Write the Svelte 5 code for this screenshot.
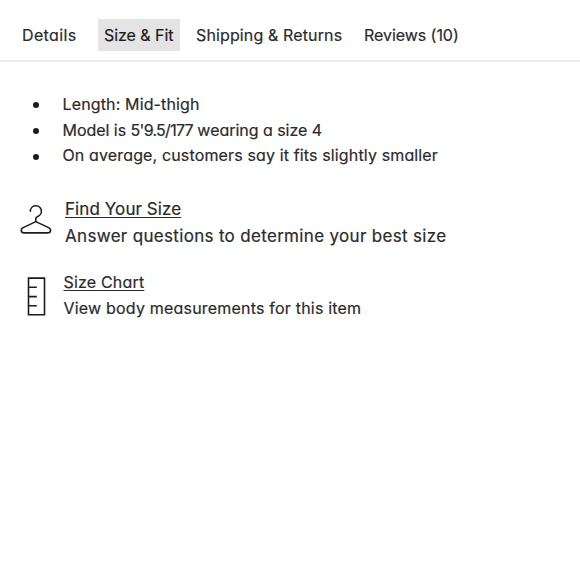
<script lang="ts">
	type Tab = { id: string; label: string };
	type Fact = { id: string; text: string; measure?: string; rest?: string };

	const tabs: Tab[] = [
		{ id: 'details', label: 'Details' },
		{ id: 'fit', label: 'Size & Fit' },
		{ id: 'shipping', label: 'Shipping & Returns' },
		{ id: 'reviews', label: 'Reviews (10)' }
	];

	const facts: Fact[] = [
		{ id: 'length', text: 'Length: Mid-thigh' },
		{ id: 'model', text: 'Model is ', measure: "5'9.5/177", rest: ' wearing a size 4' },
		{ id: 'average', text: 'On average, customers say it fits slightly smaller' }
	];

	let active = $state('fit');
</script>

<div class="panel">
	<nav class="tabs">
		{#each tabs as tab (tab.id)}
			<button
				type="button"
				class="tab {tab.id}"
				class:active={active === tab.id}
				onclick={() => (active = tab.id)}
			>
				{tab.label}
			</button>
		{/each}
	</nav>

	<ul class="facts">
		{#each facts as fact (fact.id)}
			<li>
				<span class="dot"></span>
				<span class={fact.id}
					>{fact.text}{#if fact.measure}<span class="measure">{fact.measure}</span
						>{fact.rest}{/if}</span
				>
			</li>
		{/each}
	</ul>

	<section class="help find">
		<svg class="hanger" width="32" height="32" viewBox="0 0 32 32">
			<path
				d="M10.4 7.7A5.5 5.5 0 1 1 17.8 12.4Q15.8 13.1 15.8 14.8V17.6M15.8 17.6L3.2 23.6C0.2 25.1 0.9 28.9 4 28.9H27.8C31 28.9 31.6 25.1 28.6 23.6Z"
			/>
		</svg>
		<div>
			<a href="#find-size">Find Your Size</a>
			<p>Answer questions to determine your best size</p>
		</div>
	</section>

	<section class="help chart">
		<svg class="ruler" width="20" height="40" viewBox="0 0 20 40">
			<path d="M1.5 1.1H17.5V37.8H1.5ZM1.5 10.3H9.8M1.5 19.6H9.8M1.5 28.7H9.8" />
		</svg>
		<div>
			<a href="#size-chart">Size Chart</a>
			<p>View body measurements for this item</p>
		</div>
	</section>
</div>

<style>
	:global(body) {
		margin: 0;
		background: #fff;
	}

	.panel {
		min-height: 580px;
		font-family: Inter, 'Liberation Sans', sans-serif;
		font-size: 16px;
		/* single-storey a */
		font-feature-settings: 'cv11' 1;
		-webkit-text-stroke: 0.2px currentColor;
		color: #2b2b2b;
		white-space: nowrap;
	}

	.tabs {
		display: flex;
		box-sizing: border-box;
		height: 62px;
		padding: 19px 0 0 16px;
		border-bottom: 2px solid #ebebeb;
	}

	.tab {
		box-sizing: border-box;
		height: 32px;
		padding: 0 0 0 6px;
		border: none;
		background: none;
		font: inherit;
		font-feature-settings: inherit;
		line-height: 33px;
		text-align: left;
		color: inherit;
		cursor: pointer;
	}

	.tab.active {
		background: #e4e4e4;
		color: #1c1c1c;
	}

	.details {
		width: 82px;
		letter-spacing: 0.36px;
	}

	.fit {
		width: 82px;
		margin-right: 10px;
		letter-spacing: -0.05px;
	}

	.shipping {
		width: 168px;
		letter-spacing: 0.13px;
	}

	.reviews {
		letter-spacing: -0.05px;
	}

	.facts {
		margin: 29px 0 0;
		padding: 0 0 0 33px;
		list-style: none;
	}

	.facts li {
		display: flex;
		align-items: center;
		height: 25.7px;
		letter-spacing: 0.14px;
	}

	.facts .model {
		letter-spacing: -0.03px;
	}

	.model .measure {
		letter-spacing: -0.73px;
	}

	.dot {
		width: 6px;
		height: 6px;
		margin: 3px 23.5px 0 0;
		border-radius: 50%;
		background: #1c1c1c;
	}

	.help {
		display: flex;
		padding-left: 20px;
	}

	.help a {
		display: block;
		width: max-content;
		color: inherit;
		text-decoration: underline;
		text-decoration-thickness: 1px;
		text-underline-offset: 2px;
		text-decoration-skip-ink: none;
	}

	.help p {
		margin: 0;
	}

	.find {
		margin-top: 28px;
		font-size: 17px;
		line-height: 27px;
	}

	.find a {
		letter-spacing: 0.08px;
	}

	.find p {
		letter-spacing: 0.32px;
	}

	.chart {
		margin-top: 19px;
		line-height: 26px;
	}

	.chart a {
		letter-spacing: 0.18px;
	}

	.chart p {
		letter-spacing: 0.2px;
	}

	.hanger {
		margin: 8px 13px 0 0;
	}

	.ruler {
		margin: 8px 16.5px 0 7px;
	}

	svg {
		flex: none;
		fill: none;
		stroke: #1c1c1c;
		stroke-width: 1.6;
		stroke-linejoin: round;
	}

	.ruler path {
		stroke-linejoin: miter;
	}
</style>
